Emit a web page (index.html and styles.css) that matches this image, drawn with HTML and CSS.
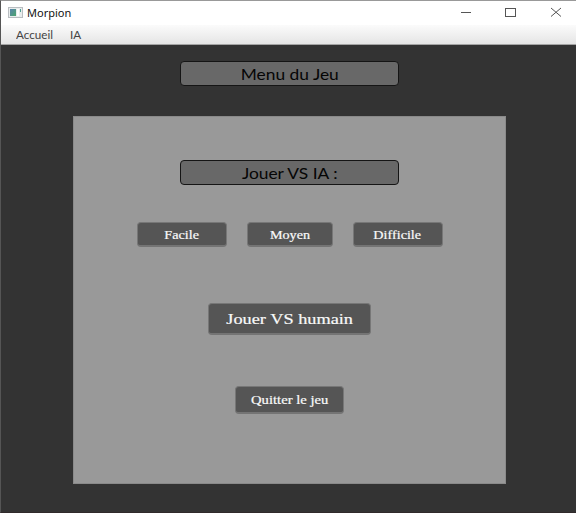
FILE: index.html
```html
<!DOCTYPE html>
<html lang="fr">
<head>
<meta charset="utf-8">
<title>Morpion</title>
<link rel="stylesheet" href="styles.css">
</head>
<body>
<div class="window">
  <header class="titlebar">
    <svg class="app-icon" width="15" height="11" viewBox="0 0 15 11">
      <defs><linearGradient id="g" x1="0" y1="0" x2="1" y2="1"><stop offset="0" stop-color="#5a83ad"/><stop offset="1" stop-color="#4aa56c"/></linearGradient></defs>
      <rect x=".5" y=".5" width="14" height="10" fill="#e9eded" stroke="#b9bdc1"/>
      <rect x="2" y="2" width="6" height="7" fill="url(#g)"/>
      <path d="M9 2h2v7H9z" fill="#fff"/>
      <path d="M12.500 2v3" stroke="#4d9f93"/>
    </svg>
    <span class="title">Morpion</span>
    <svg class="controls" width="102" height="12" viewBox="0 0 102 12" fill="none" stroke="#555">
      <path d="M0 6.500h10"/>
      <rect x="44.500" y="2.500" width="10" height="8"/>
      <path d="M90 2l10 8.500M100 2l-10 8.500"/>
    </svg>
  </header>
  <nav class="menubar"><span class="menu-item">Accueil</span><span class="menu-item">IA</span></nav>
  <main class="content">
    <h1 class="label"><span class="label-text">Menu du Jeu</span></h1>
    <section class="panel">
      <h2 class="label"><span class="label-text">Jouer VS IA :</span></h2>
      <div class="levels">
        <button class="btn easy"><span class="btn-text">Facile</span></button>
        <button class="btn medium"><span class="btn-text">Moyen</span></button>
        <button class="btn hard"><span class="btn-text">Difficile</span></button>
      </div>
      <button class="btn human"><span class="btn-text">Jouer VS humain</span></button>
      <button class="btn quit"><span class="btn-text">Quitter le jeu</span></button>
    </section>
  </main>
</div>
</body>
</html>
```
FILE: styles.css
```css
* { box-sizing: border-box; }
body { margin: 0; background: #333; }
.window {
  width: 576px; height: 513px; overflow: hidden;
  display: flex; flex-direction: column;
  border-top: 1px solid #999; border-left: 1px solid #555; border-bottom: 1px solid #302a2b;
  font-family: Lato, "Noto Sans", sans-serif;
}
.titlebar { height: 24px; flex: none; background: #fff; display: flex; align-items: center; padding-left: 7px; }
.app-icon { margin-top: -2px; }
.title { margin-left: 4px; font: 11px/20px "Noto Sans", sans-serif; color: #111; }
.controls { margin-left: auto; margin-right: 13px; margin-top: -2px; }
.menubar {
  height: 20px; flex: none; display: flex; gap: 19px; padding-left: 15px;
  background: linear-gradient(#fbfbfb, #e5e5e5); border-bottom: 1px solid #a4a4a4;
  font-size: 11px; line-height: 19px; color: #444;
}
.menu-item { transform: scaleX(1.06); transform-origin: left; }
.content { flex: 1; background: #333; display: flex; flex-direction: column; align-items: center; padding: 16px 0 0 2px; }
.label {
  width: 219px; height: 25px; margin: 0; flex: none;
  display: flex; justify-content: center;
  border: 1px solid #151515; border-radius: 4px; background: #686868;
  font-size: 15.500px; font-weight: 400; line-height: 25px; color: #050505;
}
.label-text { transform: scaleX(1.12); }
.panel {
  width: 433px; height: 368px; margin-top: 30px; padding-top: 43px; flex: none;
  display: flex; flex-direction: column; align-items: center;
  background: #999; border: 1px solid #8a8a8a;
}
.levels { display: flex; gap: 20px; margin-top: 37px; }
.btn {
  display: block; padding: 1px 0 0; flex: none;
  border: 1px solid #777; border-bottom: 2px solid #747474; border-radius: 4px;
  background: #555; color: #fafafa;
  font-family: "Liberation Serif", serif; font-size: 12px; line-height: 20px;
  -webkit-text-stroke: .2px #fafafa;
}
.btn-text { display: inline-block; transform: scaleX(1.18); }
.easy { width: 90px; height: 25px; }
.medium { width: 86px; height: 25px; }
.hard { width: 90px; height: 25px; }
.human { width: 163px; height: 32px; margin-top: 56px; padding-top: 0; font-size: 15.500px; }
.quit { width: 109px; height: 28px; margin-top: 51px; }
.quit .btn-text { transform: scaleX(1.22); }
```
